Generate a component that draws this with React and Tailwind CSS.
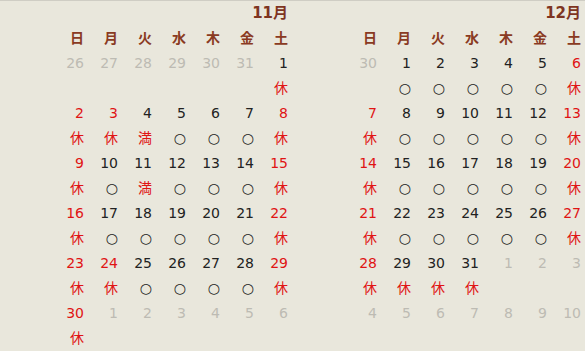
import React from 'react';

const DAYS = ['日', '月', '火', '水', '木', '金', '土'];

// c: g = grey (other month), r = red, k = black
const NOV = {
  title: '11月',
  weeks: [
    { d: [['26', 'g'], ['27', 'g'], ['28', 'g'], ['29', 'g'], ['30', 'g'], ['31', 'g'], ['1', 'k']], s: ['', '', '', '', '', '', '休'] },
    { d: [['2', 'r'], ['3', 'r'], ['4', 'k'], ['5', 'k'], ['6', 'k'], ['7', 'k'], ['8', 'r']], s: ['休', '休', '満', '○', '○', '○', '休'] },
    { d: [['9', 'r'], ['10', 'k'], ['11', 'k'], ['12', 'k'], ['13', 'k'], ['14', 'k'], ['15', 'r']], s: ['休', '○', '満', '○', '○', '○', '休'] },
    { d: [['16', 'r'], ['17', 'k'], ['18', 'k'], ['19', 'k'], ['20', 'k'], ['21', 'k'], ['22', 'r']], s: ['休', '○', '○', '○', '○', '○', '休'] },
    { d: [['23', 'r'], ['24', 'r'], ['25', 'k'], ['26', 'k'], ['27', 'k'], ['28', 'k'], ['29', 'r']], s: ['休', '休', '○', '○', '○', '○', '休'] },
    { d: [['30', 'r'], ['1', 'g'], ['2', 'g'], ['3', 'g'], ['4', 'g'], ['5', 'g'], ['6', 'g']], s: ['休', '', '', '', '', '', ''] },
  ],
};

const DEC = {
  title: '12月',
  weeks: [
    { d: [['30', 'g'], ['1', 'k'], ['2', 'k'], ['3', 'k'], ['4', 'k'], ['5', 'k'], ['6', 'r']], s: ['', '○', '○', '○', '○', '○', '休'] },
    { d: [['7', 'r'], ['8', 'k'], ['9', 'k'], ['10', 'k'], ['11', 'k'], ['12', 'k'], ['13', 'r']], s: ['休', '○', '○', '○', '○', '○', '休'] },
    { d: [['14', 'r'], ['15', 'k'], ['16', 'k'], ['17', 'k'], ['18', 'k'], ['19', 'k'], ['20', 'r']], s: ['休', '○', '○', '○', '○', '○', '休'] },
    { d: [['21', 'r'], ['22', 'k'], ['23', 'k'], ['24', 'k'], ['25', 'k'], ['26', 'k'], ['27', 'r']], s: ['休', '○', '○', '○', '○', '○', '休'] },
    { d: [['28', 'r'], ['29', 'k'], ['30', 'k'], ['31', 'k'], ['1', 'g'], ['2', 'g'], ['3', 'g']], s: ['休', '休', '休', '休', '', '', ''] },
    { d: [['4', 'g'], ['5', 'g'], ['6', 'g'], ['7', 'g'], ['8', 'g'], ['9', 'g'], ['10', 'g']], s: ['', '', '', '', '', '', ''] },
  ],
};

const numColor = {
  g: 'text-[#bdbbb3]',
  r: 'text-[#e01414]',
  k: 'text-[#222222]',
};

const statusColor = (s) => (s === '○' ? 'text-[#222222]' : 'text-[#e01414]');

const Calendar = ({ data }) => (
  <div className="flex justify-end pr-[4px]">
    <div className="w-[238px]">
      <div className="h-[25px] leading-[25px] text-right text-[15px] font-bold text-[#7e3421]">{data.title}</div>
      <div className="grid grid-cols-7">
        {DAYS.map((d) => (
          <div key={d} className="h-[25px] leading-[25px] text-right font-bold text-[#8a3a22]">
            {d}
          </div>
        ))}
      </div>
      {data.weeks.map((w, i) => (
        <React.Fragment key={i}>
          <div className="grid grid-cols-7">
            {w.d.map(([n, c], j) => (
              <div key={j} className={`h-[25px] leading-[25px] text-right ${numColor[c]}`}>
                {n}
              </div>
            ))}
          </div>
          <div className="grid grid-cols-7">
            {w.s.map((s, j) => (
              <div key={j} className={`h-[25px] leading-[25px] text-right ${statusColor(s)}`}>
                {s}
              </div>
            ))}
          </div>
        </React.Fragment>
      ))}
    </div>
  </div>
);

export default function App() {
  return (
    <div
      className="w-[585px] h-[351px] overflow-hidden bg-[#e9e7dc] border-t border-[#cfcdc4] text-[14px]"
      style={{ fontFamily: '"DejaVu Sans", "Noto Sans CJK JP", sans-serif' }}
    >
      <div className="grid grid-cols-[292px_293px]">
        <Calendar data={NOV} />
        <Calendar data={DEC} />
      </div>
    </div>
  );
}
